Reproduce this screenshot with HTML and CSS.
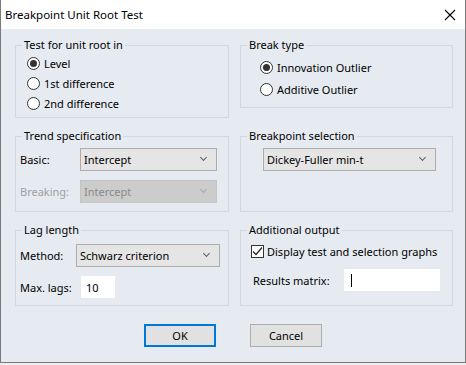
FILE: index.html
```html
<!DOCTYPE html>
<html lang="en">
<head>
    <meta charset="UTF-8">
    <title>Breakpoint Unit Root Test</title>
    <link rel="stylesheet" href="styles.css">
</head>
<body>
    <div class="dialog">
        <div class="titlebar">
            <span class="title">Breakpoint Unit Root Test</span>
            <svg class="close" width="12" height="12" viewBox="0 0 12 12">
                <path d="M1 1L11 11M11 1L1 11" stroke="#000" stroke-width="1.1" fill="none"/>
            </svg>
        </div>

        <div class="content">
            <div class="groups">
                <fieldset class="group">
                    <legend>Test for unit root in</legend>
                    <div class="unit-root">
                        <div class="radio"><span class="circle checked"></span>Level</div>
                        <div class="radio"><span class="circle"></span>1st difference</div>
                        <div class="radio"><span class="circle"></span>2nd difference</div>
                    </div>
                </fieldset>

                <fieldset class="group">
                    <legend>Break type</legend>
                    <div class="break-type">
                        <div class="radio"><span class="circle checked"></span>Innovation Outlier</div>
                        <div class="radio"><span class="circle"></span>Additive Outlier</div>
                    </div>
                </fieldset>

                <fieldset class="group">
                    <legend>Trend specification</legend>
                    <div class="trend">
                        <div class="row">
                            <span class="label trend-label">Basic:</span>
                            <div class="combo trend-combo">Intercept<span class="chevron"></span></div>
                        </div>
                        <div class="row disabled">
                            <span class="label trend-label">Breaking:</span>
                            <div class="combo trend-combo">Intercept<span class="chevron"></span></div>
                        </div>
                    </div>
                </fieldset>

                <fieldset class="group stretch">
                    <legend>Breakpoint selection</legend>
                    <div class="breakpoint">
                        <div class="combo breakpoint-combo">Dickey-Fuller min-t<span class="chevron"></span></div>
                    </div>
                </fieldset>

                <fieldset class="group">
                    <legend>Lag length</legend>
                    <div class="lag">
                        <div class="row">
                            <span class="label method-label">Method:</span>
                            <div class="combo method-combo">Schwarz criterion<span class="chevron"></span></div>
                        </div>
                        <div class="row">
                            <span class="label lags-label">Max. lags:</span>
                            <div class="field lags-field">10</div>
                        </div>
                    </div>
                </fieldset>

                <fieldset class="group stretch">
                    <legend>Additional output</legend>
                    <div class="output">
                        <div class="check-row">
                            <span class="checkbox">
                                <svg width="11" height="11" viewBox="0 0 11 11">
                                    <path d="M1 5.5L4 8.5L10 1.5" stroke="#222" stroke-width="1.2" fill="none"/>
                                </svg>
                            </span>
                            Display test and selection graphs
                        </div>
                        <div class="row matrix-row">
                            <span class="label matrix-label">Results matrix:</span>
                            <div class="field matrix-field"><span class="caret"></span></div>
                        </div>
                    </div>
                </fieldset>
            </div>

            <div class="buttons">
                <button class="btn default">OK</button>
                <button class="btn">Cancel</button>
            </div>
        </div>
    </div>
</body>
</html>
```

FILE: styles.css
```css
* {
    box-sizing: border-box;
}

html, body {
    margin: 0;
    padding: 0;
}

body {
    background: #f0f0f0;
    font-family: "Noto Sans", "DejaVu Sans", sans-serif;
    font-size: 11px;
    color: #000;
}

.dialog {
    width: 466px;
    height: 363px;
    background: #e6ebf2;
    border: 1px solid #7a7a7a;
    border-top: none;
    display: flex;
    flex-direction: column;
}

.titlebar {
    height: 29px;
    background: #fff;
    display: flex;
    align-items: center;
    justify-content: space-between;
    padding: 0 5px 0 4px;
}

.title {
    font-size: 11.5px;
}

.close {
    margin-right: 4px;
}

.content {
    padding: 8px 11px 0 14px;
}

.groups {
    display: grid;
    grid-template-columns: 214px 213px;
    column-gap: 11px;
    row-gap: 10px;
    align-items: start;
}

.group {
    margin: 0;
    padding: 0;
    min-width: 0;
    border: 1px solid #d2d8e1;
}

.group.stretch {
    align-self: stretch;
}

.group legend {
    margin-left: 6px;
    padding: 0 2px;
    line-height: 16px;
    background: #e6ebf2;
}

/* radios */
.radio {
    display: flex;
    align-items: center;
    gap: 4px;
}

.circle {
    width: 13px;
    height: 13px;
    border: 1px solid #333;
    border-radius: 50%;
    background: #fff;
    display: flex;
    align-items: center;
    justify-content: center;
}

.circle.checked::after {
    content: "";
    width: 7px;
    height: 7px;
    border-radius: 50%;
    background: #333;
}

.unit-root {
    padding: 0 0 4px 11px;
}

.unit-root .radio {
    height: 20px;
}

.break-type {
    padding: 3px 0 7px 19px;
}

.break-type .radio {
    height: 22px;
}

/* rows with a label and a control */
.row {
    display: flex;
    align-items: center;
}

.trend {
    padding: 4px 0 8px 4px;
    display: flex;
    flex-direction: column;
    gap: 9px;
}

.trend-label {
    width: 60px;
}

.trend-combo {
    width: 137px;
}

.disabled .label {
    color: #a0a0a0;
}

.disabled .combo {
    background: #cccccc;
    border-color: #c4c4c4;
    color: #8a8a8a;
}

.disabled .chevron {
    border-color: #a8a8a8;
}

.breakpoint {
    padding: 4px 0 0 22px;
}

.breakpoint-combo {
    width: 173px;
}

.combo {
    position: relative;
    height: 23px;
    background: #e5e5e5;
    border: 1px solid #adadad;
    padding-left: 3px;
    display: flex;
    align-items: center;
}

.chevron {
    position: absolute;
    right: 10px;
    top: 6px;
    width: 5px;
    height: 5px;
    border-right: 1px solid #606060;
    border-bottom: 1px solid #606060;
    transform: rotate(45deg);
}

.lag {
    padding: 6px 0 7px 4px;
    display: flex;
    flex-direction: column;
    gap: 9px;
}

.method-label {
    width: 56px;
}

.method-combo {
    width: 144px;
}

.lags-label {
    width: 61px;
}

.field {
    height: 22px;
    background: #fff;
    display: flex;
    align-items: center;
}

.lags-field {
    width: 34px;
    padding-left: 5px;
}

.output {
    padding: 4px 0 0 10px;
    display: flex;
    flex-direction: column;
    gap: 9px;
}

.check-row {
    height: 18px;
    display: flex;
    align-items: center;
    gap: 3px;
}

.checkbox {
    width: 13px;
    height: 13px;
    border: 1px solid #333;
    background: #fff;
    display: flex;
    align-items: center;
    justify-content: center;
}

.matrix-row {
    padding-left: 2px;
}

.matrix-label {
    width: 91px;
}

.matrix-field {
    width: 96px;
    padding-left: 7px;
}

.caret {
    width: 1px;
    height: 13px;
    background: #000;
}

/* buttons */
.buttons {
    display: flex;
    justify-content: center;
    gap: 34px;
    padding: 18px 3px 0 0;
}

.btn {
    width: 72px;
    height: 23px;
    margin: 0;
    font-family: inherit;
    font-size: 11px;
    background: #e1e1e1;
    border: 1px solid #adadad;
    color: #000;
    padding: 0;
}

.btn.default {
    border: 2px solid #0078d7;
}
```
